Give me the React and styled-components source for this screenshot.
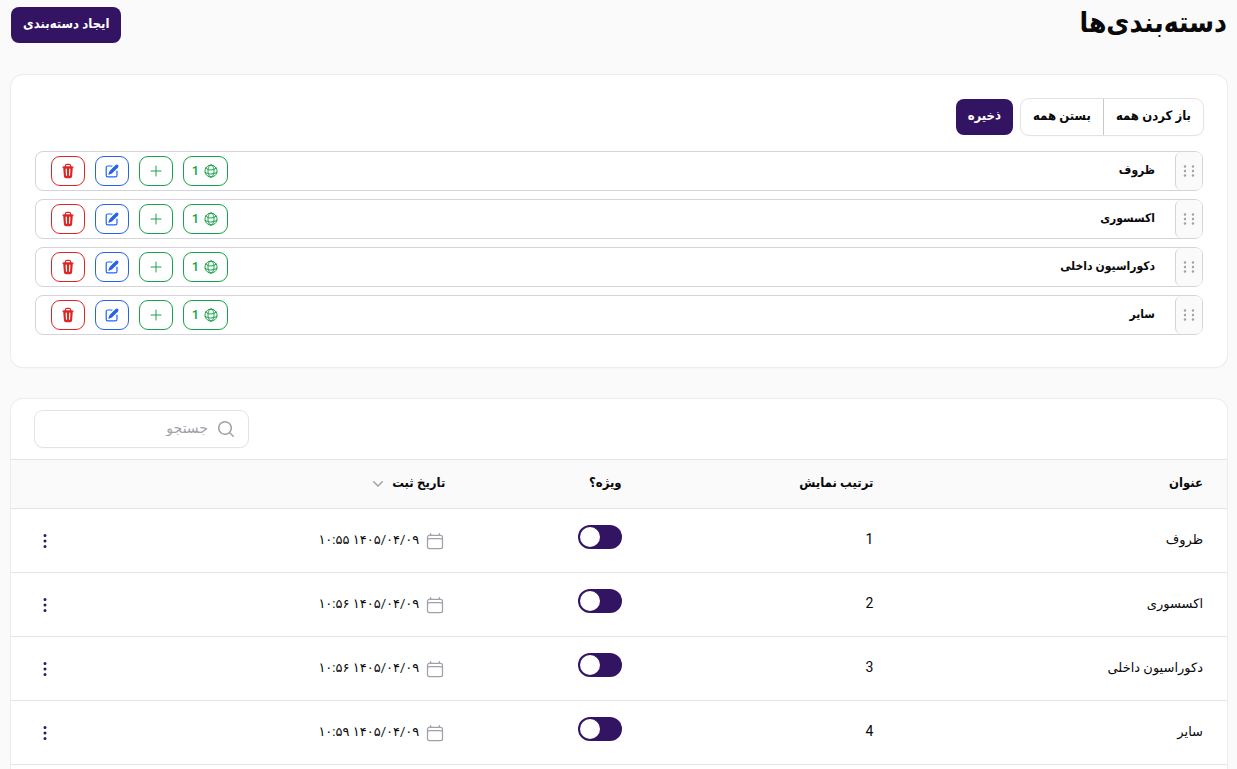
import { useState } from 'react';
import styled, { createGlobalStyle } from 'styled-components';
import {
  HiOutlineGlobeAlt,
  HiOutlinePlus,
  HiOutlineCalendar,
  HiMiniPencilSquare,
  HiMiniTrash,
  HiMiniChevronDown,
  HiMiniEllipsisVertical,
  HiMiniMagnifyingGlass,
} from 'react-icons/hi2';

const BOLD_FONT = "Roboto, 'DejaVu Sans Condensed', 'DejaVu Sans', sans-serif";

const GlobalStyle = createGlobalStyle`
  *,
  *::before,
  *::after {
    box-sizing: border-box;
  }
  html {
    scrollbar-width: none;
  }
  body {
    margin: 0;
    background-color: #fafafa;
    color: #09090b;
    font-family: Roboto, 'DejaVu Sans', sans-serif;
    font-size: 14px;
    line-height: 20px;
  }
  button,
  input {
    font: inherit;
    color: inherit;
  }
  svg {
    display: block;
    flex-shrink: 0;
  }
`;
const Page = styled.main`
  display: flex;
  flex-direction: column;
  gap: 32px;
  padding: 7px 10px 32px 11px;
`;
const PageHeader = styled.header`
  display: flex;
  align-items: flex-start;
  justify-content: space-between;
  > h1 {
    margin: 0;
    font-family: ${BOLD_FONT};
    font-size: 28px;
    line-height: 32px;
    font-weight: 700;
  }
`;
const PrimaryButton = styled.button`
  height: 36px;
  padding: 0 12px 2px;
  border: none;
  border-radius: 8px;
  background-color: #321463;
  color: white;
  font-family: ${BOLD_FONT};
  font-size: 13px;
  font-weight: 600;
  cursor: pointer;
  &:hover {
    background-color: #45208a;
  }
`;
const Card = styled.section`
  border-radius: 12px;
  background-color: white;
  box-shadow: 0 0 0 1px #ececed, 0 1px 2px rgba(0, 0, 0, 0.05);
`;
const TreeCard = styled(Card)`
  padding: 24px 24px 32px;
`;
const TreeActions = styled.div`
  display: flex;
  gap: 8px;
  margin-bottom: 16px;
`;
const ButtonGroup = styled.div`
  display: flex;
  border-radius: 8px;
  box-shadow: 0 0 0 1px #e3e3e5, 0 1px 2px rgba(0, 0, 0, 0.05);
  > button {
    height: 36px;
    padding: 0 12px 2px;
    border: none;
    background: none;
    font-family: ${BOLD_FONT};
    font-size: 13px;
    font-weight: 600;
    cursor: pointer;
  }
  > button + button {
    border-right: 1px solid #c9c9cd;
  }
`;
const TreeList = styled.ul`
  display: flex;
  flex-direction: column;
  gap: 8px;
  margin: 0;
  padding: 0;
  list-style: none;
`;
const TreeItem = styled.li`
  display: flex;
  align-items: center;
  height: 40px;
  border: 1px solid #d4d4d8;
  border-radius: 8px;
  padding-left: 15px;
`;
const DragHandle = styled.button`
  display: flex;
  align-items: center;
  justify-content: center;
  width: 27px;
  height: 38px;
  padding: 0;
  border: none;
  border-left: 1px solid #d4d4d8;
  border-radius: 6px;
  background-color: #fafafa;
  color: #a1a1aa;
  cursor: move;
`;
const TreeLabel = styled.span`
  flex: 1;
  padding: 0 20px 2px 0;
  font-family: ${BOLD_FONT};
  font-size: 12px;
  font-weight: 600;
`;
const TreeButtons = styled.div`
  display: flex;
  gap: 10px;
`;
const OutlineButton = styled.button`
  display: flex;
  align-items: center;
  justify-content: center;
  gap: 4px;
  height: 30px;
  padding: 0 8px;
  border: 1px solid ${({ $color }) => $color};
  border-radius: 9px;
  background: none;
  color: ${({ $color }) => $color};
  font-size: 12px;
  font-weight: 600;
  cursor: pointer;
`;
const TableToolbar = styled.div`
  display: flex;
  justify-content: flex-end;
  padding: 12px 24px;
`;
const SearchBox = styled.label`
  display: flex;
  align-items: center;
  gap: 8px;
  width: 213px;
  height: 36px;
  padding: 0 12px;
  border-radius: 8px;
  box-shadow: 0 0 0 1px #e3e3e5, 0 1px 2px rgba(0, 0, 0, 0.05);
  > svg {
    color: #a1a1aa;
  }
  > input {
    flex: 1;
    min-width: 0;
    padding: 0 0 2px;
    border: none;
    outline: none;
    background: none;
    &::placeholder {
      color: #a1a1aa;
    }
  }
`;
const Table = styled.table`
  width: 100%;
  border-collapse: separate;
  border-spacing: 0;
  table-layout: fixed;
  th {
    height: 50px;
    padding: 0 12px 2px;
    border-top: 1px solid #e4e4e7;
    border-bottom: 1px solid #e4e4e7;
    background-color: #fafafa;
    font-family: ${BOLD_FONT};
    font-size: 13px;
    font-weight: 600;
    text-align: right;
  }
  td {
    height: 64px;
    padding: 0 12px 2px;
    border-bottom: 1px solid #e4e4e7;
    font-size: 13px;
  }
  th:first-child,
  td:first-child {
    padding-right: 24px;
  }
  td:last-child {
    padding-left: 24px;
  }
`;
const Column = styled.col`
  width: ${({ $width }) => $width};
`;
const IconCell = styled.td`
  && {
    padding-bottom: 0;
  }
`;
const OrderNumber = styled.span`
  font-size: 14px;
`;
const SortButton = styled.button`
  display: flex;
  align-items: center;
  gap: 4px;
  padding: 0;
  border: none;
  background: none;
  cursor: pointer;
  > svg {
    color: #a1a1aa;
  }
`;
const Toggle = styled.input`
  appearance: none;
  display: flex;
  justify-content: ${({ checked }) => (checked ? 'flex-end' : 'flex-start')};
  width: 44px;
  height: 24px;
  margin: 0 0 6px;
  padding: 2px;
  border-radius: 12px;
  background-color: ${({ checked }) => (checked ? '#321463' : '#e4e4e7')};
  cursor: pointer;
  &::before {
    content: '';
    width: 20px;
    height: 20px;
    border-radius: 50%;
    background-color: white;
  }
`;
const DateCell = styled.div`
  display: flex;
  align-items: center;
  gap: 6px;
  > svg {
    color: #a1a1aa;
  }
  > time {
    padding-bottom: 2px;
  }
`;
const MenuButton = styled.button`
  display: block;
  margin-right: auto;
  padding: 0;
  border: none;
  background: none;
  color: #321463;
  cursor: pointer;
`;
const TableFooter = styled.div`
  height: 60px;
`;

const GREEN = '#16a34a';
const BLUE = '#2563eb';
const RED = '#dc2626';

const categories = [
  { id: 1, title: 'ظروف', date: '۱۴۰۵/۰۴/۰۹ ۱۰:۵۵' },
  { id: 2, title: 'اکسسوری', date: '۱۴۰۵/۰۴/۰۹ ۱۰:۵۶' },
  { id: 3, title: 'دکوراسیون داخلی', date: '۱۴۰۵/۰۴/۰۹ ۱۰:۵۶' },
  { id: 4, title: 'سایر', date: '۱۴۰۵/۰۴/۰۹ ۱۰:۵۹' },
];

const GripIcon = () => (
  <svg width="12" height="12" viewBox="0 0 12 12" fill="currentColor">
    {[2, 10].map((x) =>
      [1.5, 6, 10.5].map((y) => <circle key={`${x}-${y}`} cx={x} cy={y} r="1.2" />)
    )}
  </svg>
);

const CategoryTree = () => (
  <TreeCard>
    <TreeActions>
      <ButtonGroup>
        <button type="button">باز کردن همه</button>
        <button type="button">بستن همه</button>
      </ButtonGroup>
      <PrimaryButton type="button">ذخیره</PrimaryButton>
    </TreeActions>
    <TreeList>
      {categories.map(({ id, title }) => (
        <TreeItem key={id}>
          <DragHandle type="button" aria-label="جابجایی">
            <GripIcon />
          </DragHandle>
          <TreeLabel>{title}</TreeLabel>
          <TreeButtons>
            <OutlineButton type="button" $color={GREEN}>
              <HiOutlineGlobeAlt size={16} />
              1
            </OutlineButton>
            <OutlineButton type="button" $color={GREEN} aria-label="افزودن">
              <HiOutlinePlus size={16} />
            </OutlineButton>
            <OutlineButton type="button" $color={BLUE} aria-label="ویرایش">
              <HiMiniPencilSquare size={16} />
            </OutlineButton>
            <OutlineButton type="button" $color={RED} aria-label="حذف">
              <HiMiniTrash size={16} />
            </OutlineButton>
          </TreeButtons>
        </TreeItem>
      ))}
    </TreeList>
  </TreeCard>
);

const CategoryTable = () => {
  const [search, setSearch] = useState('');
  const [special, setSpecial] = useState({ 1: true, 2: true, 3: true, 4: true });

  const handleToggle = (id) => {
    setSpecial({ ...special, [id]: !special[id] });
  };

  return (
    <Card>
      <TableToolbar>
        <SearchBox>
          <HiMiniMagnifyingGlass size={20} />
          <input
            type="text"
            placeholder="جستجو"
            aria-label="جستجو"
            value={search}
            onChange={(e) => setSearch(e.target.value)}
          />
        </SearchBox>
      </TableToolbar>
      <Table>
        <colgroup>
          <Column $width="28.1%" />
          <Column $width="20.7%" />
          <Column $width="14.5%" />
          <Column $width="auto" />
          <Column $width="68px" />
        </colgroup>
        <thead>
          <tr>
            <th>عنوان</th>
            <th>ترتیب نمایش</th>
            <th>ویژه؟</th>
            <th>
              <SortButton type="button">
                تاریخ ثبت
                <HiMiniChevronDown size={20} />
              </SortButton>
            </th>
            <th />
          </tr>
        </thead>
        <tbody>
          {categories
            .filter(({ title }) => title.includes(search))
            .map(({ id, title, date }) => (
              <tr key={id}>
                <td>{title}</td>
                <td>
                  <OrderNumber>{id}</OrderNumber>
                </td>
                <td>
                  <Toggle
                    type="checkbox"
                    role="switch"
                    aria-label={`ویژه؟ ${title}`}
                    checked={special[id]}
                    onChange={() => handleToggle(id)}
                  />
                </td>
                <IconCell>
                  <DateCell>
                    <HiOutlineCalendar size={20} />
                    <time>{date}</time>
                  </DateCell>
                </IconCell>
                <IconCell>
                  <MenuButton type="button" aria-label="عملیات">
                    <HiMiniEllipsisVertical size={20} />
                  </MenuButton>
                </IconCell>
              </tr>
            ))}
        </tbody>
      </Table>
      <TableFooter />
    </Card>
  );
};

const App = () => (
  <>
    <GlobalStyle />
    <Page dir="rtl" lang="fa">
      <PageHeader>
        <h1>دسته‌بندی‌ها</h1>
        <PrimaryButton type="button">ایجاد دسته‌بندی</PrimaryButton>
      </PageHeader>
      <CategoryTree />
      <CategoryTable />
    </Page>
  </>
);

export default App;
